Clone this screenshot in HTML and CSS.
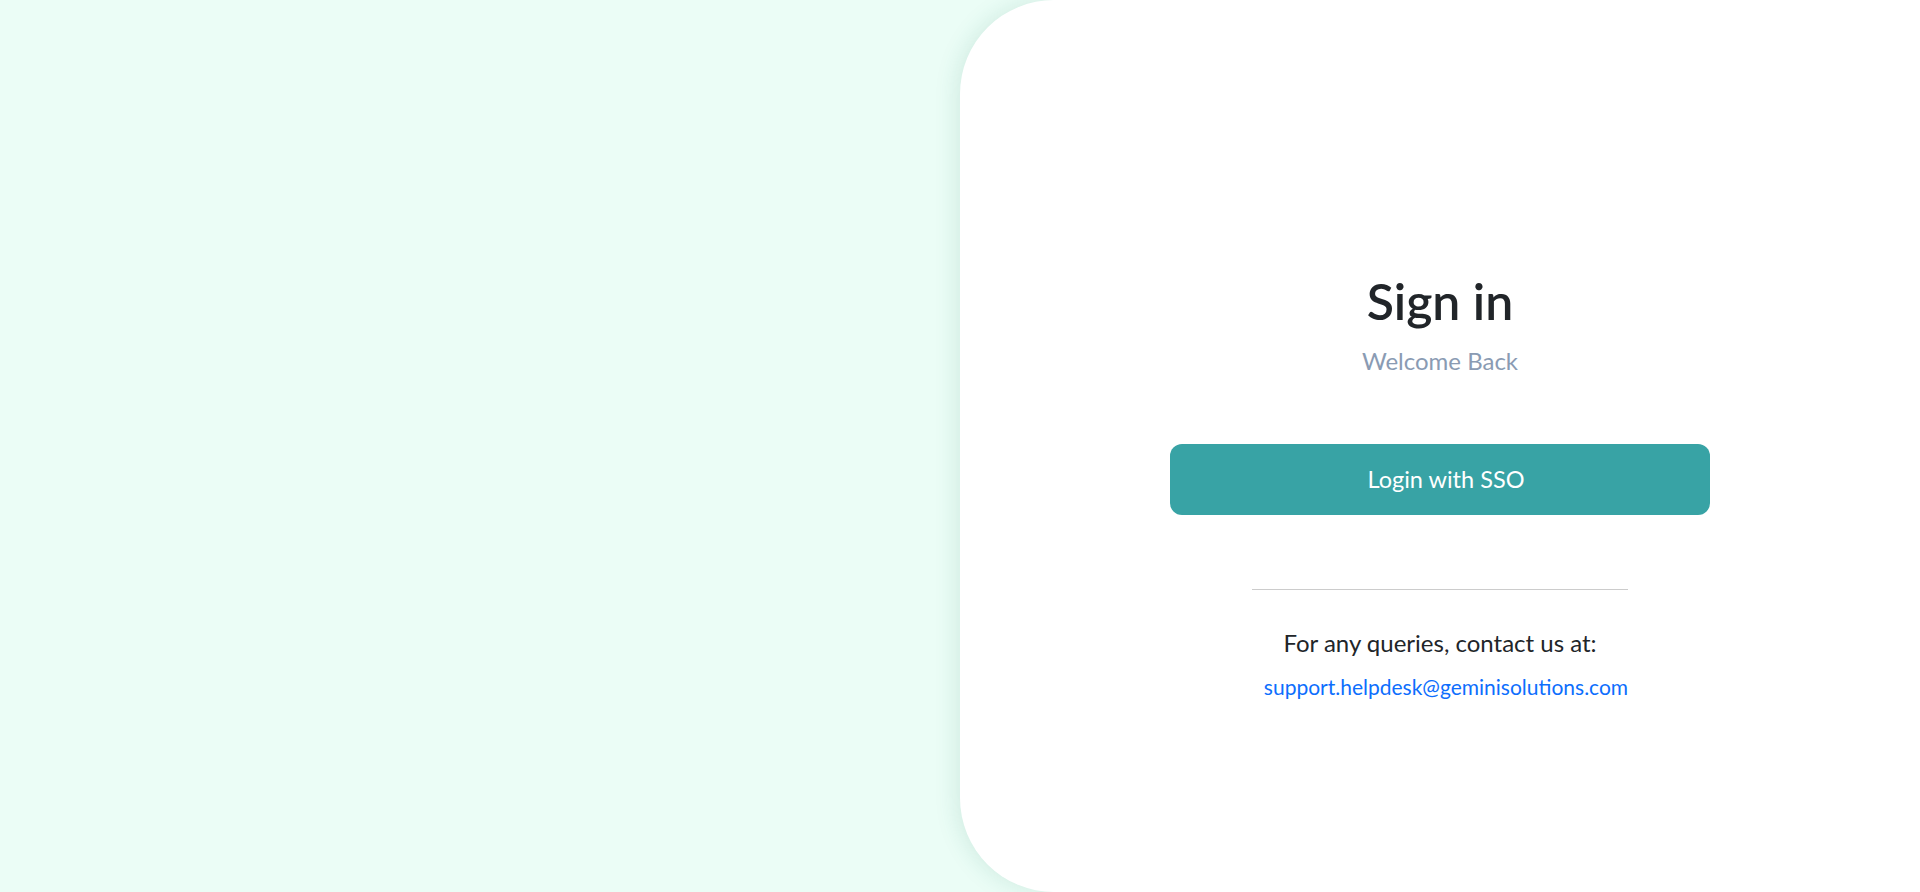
FILE: index.html
```html
<!DOCTYPE html>
<html lang="en">
<head>
<meta charset="utf-8">
<title>Sign in</title>
<link rel="stylesheet" href="styles.css">
</head>
<body>
<div class="page">
  <div class="left"></div>
  <div class="card">
    <div class="content">
      <h1 class="title">Sign in</h1>
      <p class="subtitle">Welcome Back</p>
      <button class="sso-btn" type="button">Login with SSO</button>
      <hr class="divider">
      <p class="query">For any queries, contact us at:</p>
      <a class="mail" href="#">support.helpdesk@geminisolutions.com</a>
    </div>
  </div>
</div>
</body>
</html>
```
FILE: styles.css
```css
* { box-sizing: border-box; }
html, body { margin: 0; padding: 0; height: 100%; }
body {
  font-family: Lato, "Open Sans", sans-serif;
  background: #ebfdf6;
  overflow: hidden;
}
.page {
  display: flex;
  width: 1920px;
  height: 892px;
}
.left {
  flex: 0 0 960px;
  background: #ebfdf6;
}
.card {
  flex: 1;
  background: #fff;
  border-radius: 94px 0 0 94px;
  box-shadow: -4px 0 22px rgba(40, 120, 100, 0.13);
  display: flex;
  justify-content: center;
  padding-top: 271px;
}
.content {
  display: flex;
  flex-direction: column;
  align-items: center;
  width: 540px;
}
.title {
  margin: 0;
  font-size: 50px;
  font-weight: 600;
  line-height: 1.2;
  color: #212529;
}
.subtitle {
  margin: 16px 0 0;
  font-size: 24px;
  line-height: 1.2;
  color: #8a9bb3;
}
.sso-btn {
  margin-top: 68px;
  width: 540px;
  height: 71px;
  padding: 0 0 0 12px;
  border: none;
  border-radius: 12px;
  background: #38a3a5;
  color: #fff;
  font-family: Lato, "Open Sans", sans-serif;
  font-size: 23.5px;
  cursor: pointer;
}
.divider {
  margin: 74px 0 0;
  width: 376px;
  border: none;
  border-top: 1px solid #cccccc;
}
.query {
  margin: 39px 0 0;
  font-size: 24px;
  line-height: 1.2;
  color: #212529;
}
.mail {
  margin-top: 16px;
  margin-left: 12px;
  font-size: 21px;
  line-height: 1.2;
  color: #0d6efd;
  text-decoration: none;
}
```
